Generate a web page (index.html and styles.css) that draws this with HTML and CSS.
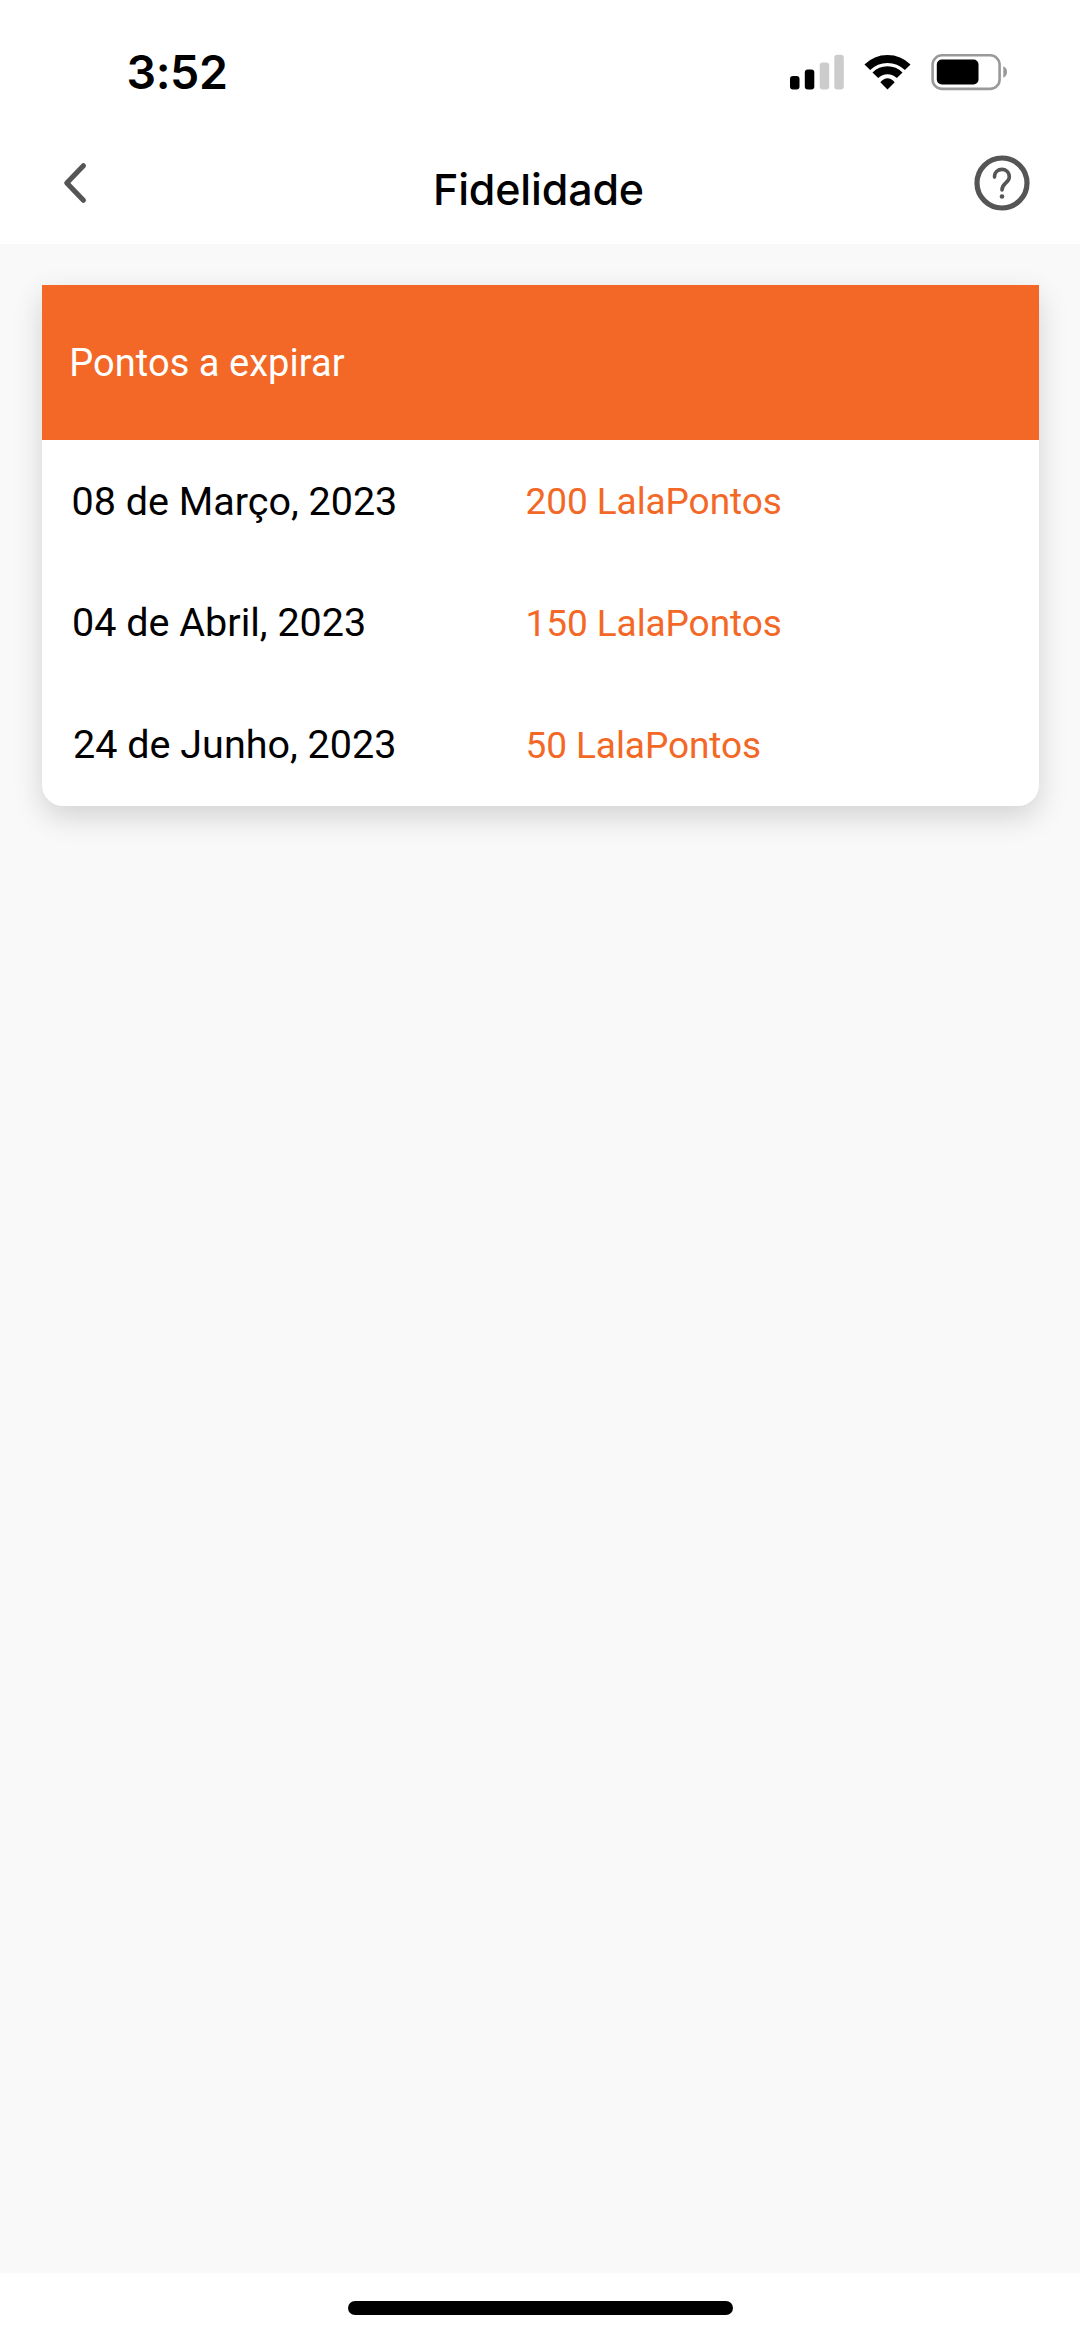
FILE: index.html
```
<!DOCTYPE html>
<html lang="pt-BR">
<head>
<meta charset="utf-8">
<title>Fidelidade</title>
<link rel="stylesheet" href="styles.css">
</head>
<body>
<div class="screen">
  <header class="top">
    <div class="status">
      <span class="time">3:52</span>
      <svg class="status-icons" width="220" height="40" viewBox="789 51.5 220 40" aria-hidden="true">
        <rect x="790" y="75.5" width="9.5" height="13.5" rx="3"/>
        <rect x="804.8" y="69" width="9.5" height="20" rx="3"/>
        <rect class="dim" x="819.7" y="62" width="9.5" height="27" rx="3"/>
        <rect class="dim" x="834.3" y="54.3" width="9.5" height="34.7" rx="3"/>
        <path class="arc" d="M867.3 66.8A28.5 28.5 0 0 1 907.7 66.8"/>
        <path class="arc" d="M875.3 74.8A17.2 17.2 0 0 1 899.7 74.8"/>
        <path d="M887.5 89L880.3 81.8Q887.5 73.8 894.7 81.8Z"/>
        <rect class="case" x="932.6" y="54.8" width="67" height="33.6" rx="9.5"/>
        <rect x="936.8" y="59" width="41.7" height="25" rx="5"/>
        <path class="nub" d="M1003.3 65.8Q1007 67.5 1007 71.5T1003.3 77.2Z"/>
      </svg>
    </div>
    <nav class="nav">
      <svg class="line" width="28" height="44" viewBox="61 160.5 28 44" role="img" aria-label="Voltar">
        <path d="M83.4 165.3L66.8 182.5L83.4 199.7"/>
      </svg>
      <h1 class="title">Fidelidade</h1>
      <svg class="line" width="60" height="60" viewBox="972.3 152.5 60 60" role="img" aria-label="Ajuda">
        <circle cx="1002.3" cy="182.5" r="25"/>
        <path class="thin" d="M994.8 176.6C994.8 166.3 1009.6 166.3 1009.6 176.4C1009.6 182.4 1002.3 182.6 1002.3 189.4"/>
        <circle class="dot" cx="1002.3" cy="196" r="2.3"/>
      </svg>
    </nav>
  </header>
  <main class="content">
    <section class="card">
      <h2 class="card-head">Pontos a expirar</h2>
      <ul class="list">
        <li class="row"><span class="date">08 de Março, 2023</span><span class="points">200 LalaPontos</span></li>
        <li class="row"><span class="date">04 de Abril, 2023</span><span class="points">150 LalaPontos</span></li>
        <li class="row"><span class="date">24 de Junho, 2023</span><span class="points">50 LalaPontos</span></li>
      </ul>
    </section>
  </main>
  <footer class="foot"><div class="home"></div></footer>
</div>
</body>
</html>
```
FILE: styles.css
```
* { box-sizing: border-box; margin: 0; padding: 0; }
body { background: #fff; color: #000; font-family: Roboto, sans-serif; }
.screen { display: flex; flex-direction: column; width: 1080px; height: 2337px; overflow: hidden; }

.top { height: 244px; background: #fff; font-family: Inter, sans-serif; }
.status { display: flex; align-items: center; justify-content: space-between; height: 143px; padding: 0 71px 0 126.5px; }
.time { font-size: 46.5px; font-weight: 600; letter-spacing: -0.4px; line-height: 56px; }
.status-icons .dim { fill: #ccc; }
.status-icons .arc { fill: none; stroke: #000; stroke-width: 8; }
.status-icons .case { fill: none; stroke: #999; stroke-width: 2.6; }
.status-icons .nub { fill: #999; }

.nav { display: flex; align-items: center; justify-content: space-between; height: 79px; padding: 0 47.7px 0 61px; }
.title { padding-top: 12px; margin-left: 15.6px; font-size: 43px; font-weight: 500; line-height: 52px; letter-spacing: -0.15px; }
.line { fill: none; stroke: #555; stroke-width: 5.2; stroke-linecap: round; stroke-linejoin: round; }
.line .thin { stroke-width: 3.6; }
.line .dot { fill: #555; stroke: none; }

.content { flex: 1; padding: 41px 41.5px 0; background: #f9f9f9; }
.card { background: #fff; border-radius: 0 0 21px 21px; box-shadow: 0 11px 30px rgba(0, 0, 0, 0.155); }
.card-head { height: 155px; padding-left: 27.8px; background: #f36826; color: #fff; font-size: 38px; font-weight: 400; line-height: 157px; letter-spacing: 0.05px; }
.list { list-style: none; padding-top: 1px; height: 366px; }
.row { display: grid; grid-template-columns: 454px 1fr; height: 122px; padding-left: 30px; line-height: 122px; }
.date { font-size: 39.5px; }
.row:nth-child(n + 2) .date { line-height: 120px; padding-left: 0.6px; }
.row:nth-child(3) .date { padding-left: 1.6px; }
.points { color: #f36826; font-size: 37px; letter-spacing: -0.08px; }

.foot { display: flex; justify-content: center; height: 64px; padding-top: 28px; background: #fff; }
.home { width: 385px; height: 14px; border-radius: 7px; background: #000; }
```
